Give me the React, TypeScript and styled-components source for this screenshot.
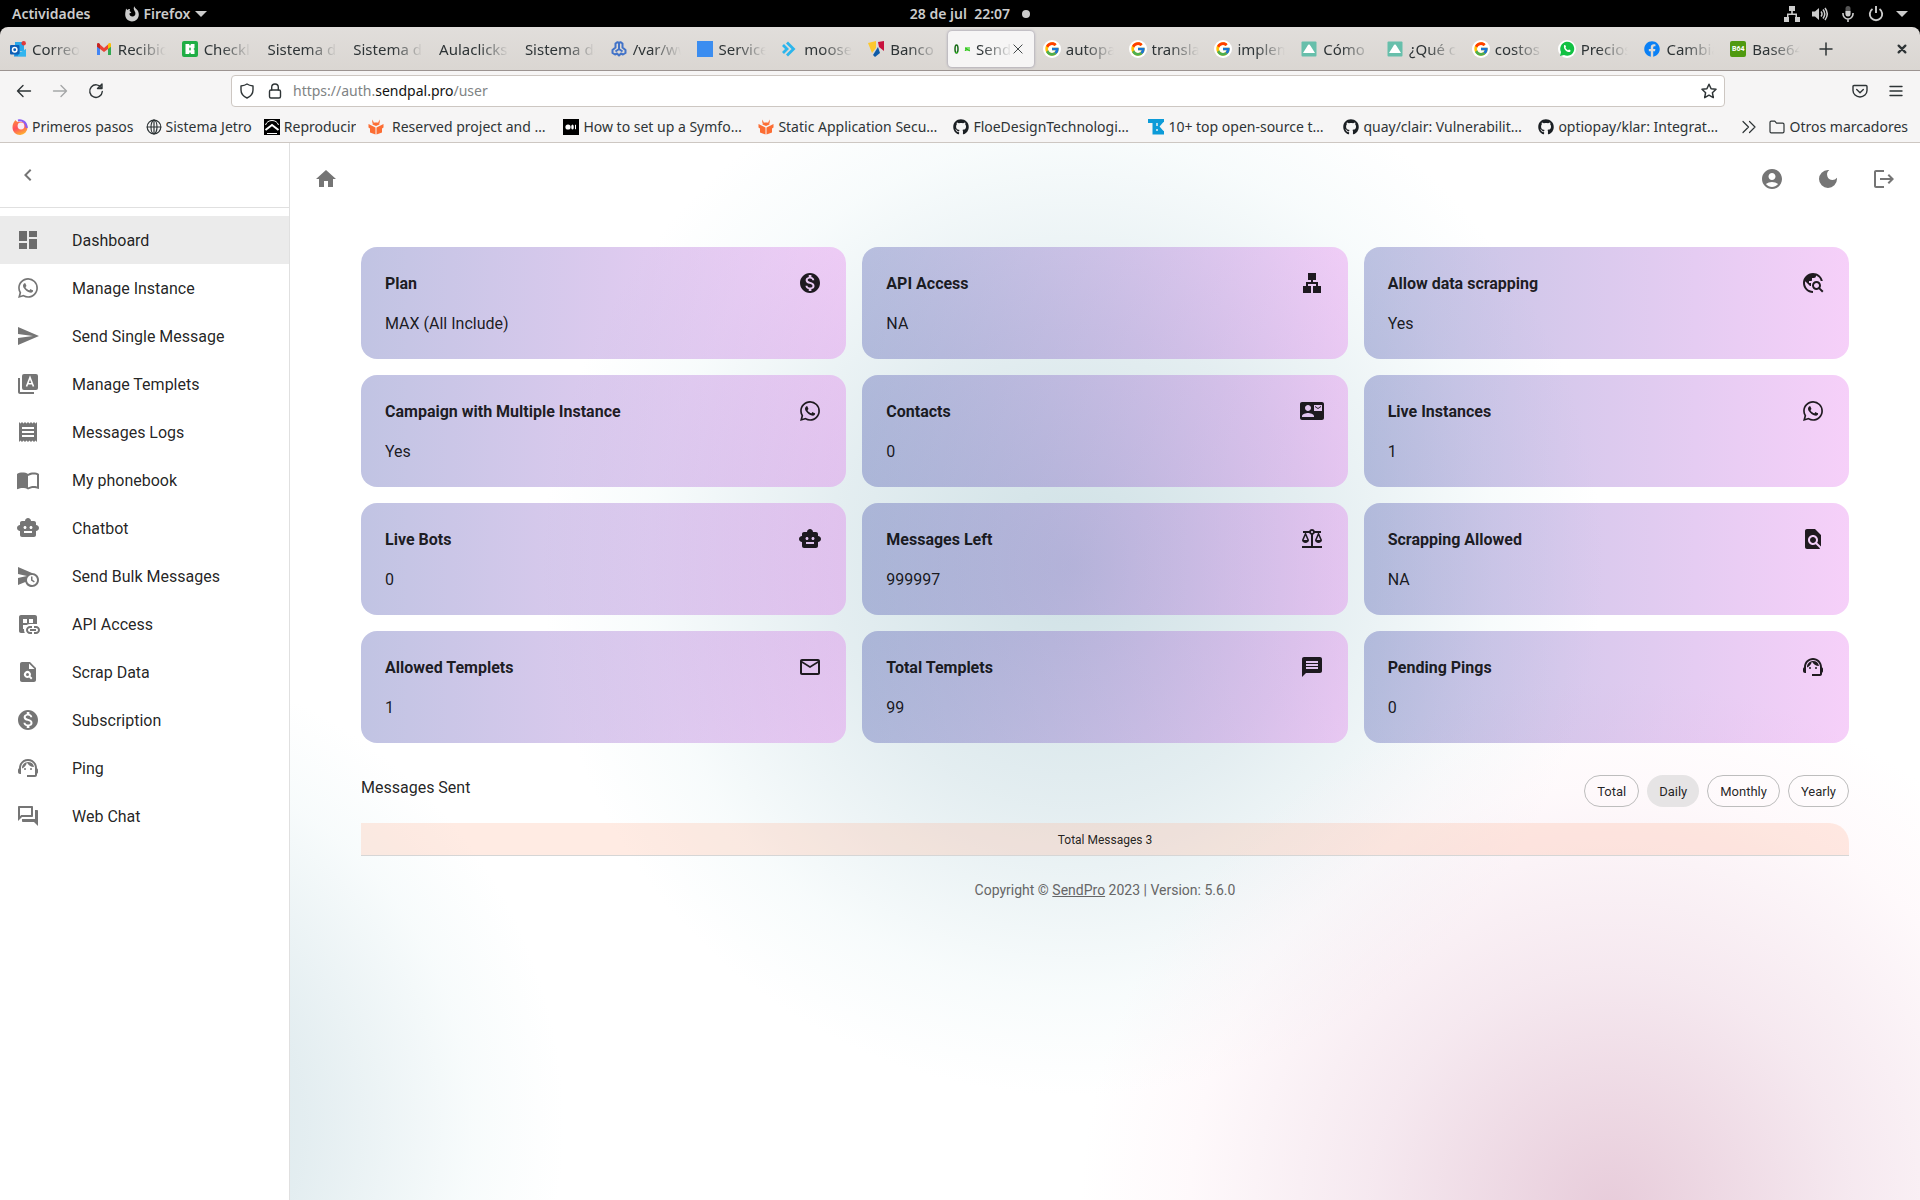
import React, { useState } from "react";
import styled, { createGlobalStyle, css } from "styled-components";
import {
  MdAccountCircle, MdBalance, MdChevronLeft, MdContactMail, MdDarkMode, MdDashboard, MdDatasetLinked,
  MdFindInPage, MdHome, MdImportContacts, MdLan, MdLogout, MdMailOutline, MdMessage, MdMonetizationOn,
  MdOutlineForum, MdPlagiarism, MdReceipt, MdScheduleSend, MdSend, MdSmartToy, MdSupportAgent,
  MdTravelExplore, MdWhatsapp,
} from "react-icons/md";
import { FaFacebook, FaGithub } from "react-icons/fa";
import { FcGoogle } from "react-icons/fc";

const systemFont = '"Noto Sans", "Open Sans", sans-serif';
const appFont = 'Roboto, "Liberation Sans", sans-serif';

const GlobalStyle = createGlobalStyle`
  *, *::before, *::after { box-sizing: border-box; }
  body { margin: 0; background: #fff; }
  button, input { font: inherit; color: inherit; }
  button { padding: 0; border: 0; background: none; cursor: pointer; }
  a { color: inherit; text-decoration: none; }
  svg { display: block; flex: none; }
`;

const Screen = styled.div`
  display: flex;
  flex-direction: column;
  min-height: 100vh;
  background: #fff;
`;

/* ---------- desktop bar ---------- */

const DesktopBar = styled.header`
  display: grid;
  grid-template-columns: 1fr auto 1fr;
  align-items: center;
  height: 27px;
  padding: 0 12px;
  background: #000;
  color: #ccc;
  font: 600 14px/20px ${systemFont};
`;

const BarGroup = styled.div<{ $end?: boolean; $gap: number }>`
  display: flex;
  align-items: center;
  gap: ${(p) => p.$gap}px;
  justify-content: ${(p) => (p.$end ? "flex-end" : "flex-start")};
`;

const Clock = styled.div`
  display: flex;
  align-items: center;
  gap: 12px;
  padding-left: 20px;
`;

const BarButton = styled.button`
  display: flex;
  align-items: center;
  gap: 5px;
`;

const Dot = styled.span`
  width: 8px;
  height: 8px;
  border-radius: 50%;
  background: #ccc;
`;

/* ---------- browser ---------- */

const TabStripBack = styled.div`
  background: #000;
`;

const TabStrip = styled.div`
  display: flex;
  align-items: center;
  height: 44px;
  padding: 0 8px 0 2px;
  border-radius: 8px 8px 0 0;
  border-bottom: 1px solid #9c9491;
  background: linear-gradient(#e1dedb, #dad6d2);
  color: #2e3436;
  font: 400 15px/20px ${systemFont};
`;

const TabList = styled.div`
  display: flex;
  flex: 0 1 1806px;
  min-width: 0;
`;

const Tab = styled.div<{ $active: boolean }>`
  display: flex;
  align-items: center;
  flex: 1 1 0;
  min-width: 0;
  height: 36px;
  margin: 0 2px;
  padding: 0 6px;
  border-radius: 4px;
  ${(p) => p.$active && css`
    padding-right: 10px;
    background: #f6f5f5;
    box-shadow: 0 0 3px #8d8aa0;
  `}
`;

const TabButton = styled.button`
  display: flex;
  align-items: center;
  flex: 1 1 0;
  gap: 6px;
  min-width: 0;
  text-align: left;
`;

const TabTitle = styled.span`
  flex: 1;
  overflow: hidden;
  white-space: nowrap;
  mask-image: linear-gradient(to left, transparent, #000 30px);
`;

const StripButton = styled.button<{ $push?: boolean }>`
  display: flex;
  align-items: center;
  justify-content: center;
  width: 20px;
  height: 24px;
  margin-left: ${(p) => (p.$push ? "auto" : "8px")};
`;

const Toolbar = styled.div`
  display: flex;
  align-items: center;
  height: 40px;
  padding: 0 12px;
  background: #f6f5f5;
  color: #2e3436;
`;

const NavButtons = styled.div`
  display: flex;
  gap: 12px;
  width: 219px;
  flex: none;
`;

const ToolButton = styled.button<{ $dim?: boolean }>`
  display: flex;
  align-items: center;
  justify-content: center;
  width: 24px;
  height: 24px;
  opacity: ${(p) => (p.$dim ? 0.4 : 1)};
`;

const UrlBar = styled.div`
  display: flex;
  align-items: center;
  flex: 1;
  min-width: 0;
  height: 32px;
  padding: 0 3px;
  border: 1px solid #cdc7c2;
  border-radius: 4px;
  background: #fff;
  font: 400 14px/20px ${systemFont};
`;

const UrlLabel = styled.label`
  margin-left: 6px;
  color: #808384;
  b { color: #111; font-weight: 400; }
`;

const UrlInput = styled.input`
  flex: 1;
  min-width: 0;
  border: 0;
  outline: 0;
  background: transparent;
`;

const ToolEnd = styled.div`
  display: flex;
  justify-content: flex-end;
  gap: 12px;
  width: 183px;
  flex: none;
`;

const UrlGroup = styled.div`
  display: flex;
  gap: 4px;
`;

const BookmarkBar = styled.nav`
  display: flex;
  align-items: center;
  gap: 12px;
  height: 32px;
  padding: 0 12px;
  background: #f6f5f5;
  border-bottom: 1px solid #cdc7c2;
  color: #2e3436;
  font: 400 14px/20px ${systemFont};
`;

const Bookmark = styled.a`
  display: flex;
  align-items: center;
  gap: 4px;
  flex: none;
  max-width: 183px;
  span {
    overflow: hidden;
    text-overflow: ellipsis;
    white-space: pre;
  }
`;

const BookmarkEnd = styled.div`
  display: flex;
  align-items: center;
  gap: 8px;
  margin-left: auto;
`;

const RoundBadge = styled.span`
  display: flex;
  padding: 1px;
  margin: -1px;
  border-radius: 50%;
  background: #fff;
`;

/* ---------- application ---------- */

const Workspace = styled.div`
  display: flex;
  flex: 1;
  font: 400 16px/24px ${appFont};
  color: rgba(0, 0, 0, 0.87);
`;

const Sidebar = styled.aside`
  width: 290px;
  flex: none;
  border-right: 1px solid #e0e0e0;
  background: #fff;
`;

const SidebarHead = styled.div`
  display: flex;
  align-items: center;
  height: 65px;
  padding: 0 16px;
  border-bottom: 1px solid #e0e0e0;
  color: #757575;
`;

const SideNav = styled.nav`
  padding: 8px 0;
`;

const SideLink = styled.a<{ $active: boolean }>`
  display: flex;
  align-items: center;
  gap: 32px;
  height: 48px;
  padding: 0 16px;
  background: ${(p) => (p.$active ? "#ebebeb" : "transparent")};
  svg { color: ${(p) => (p.$active ? "#6c6c6c" : "#757575")}; }
  span { padding-top: 2px; }
`;

const Main = styled.main`
  flex: 1;
  min-width: 0;
  background:
    radial-gradient(circle 530px at 81% 101%, rgba(222, 184, 204, 0.72), rgba(236, 210, 224, 0.5) 45%, rgba(252, 232, 240, 0.25) 80%, rgba(255, 240, 245, 0)),
    radial-gradient(circle 530px at 48% 40%, rgba(190, 214, 220, 0.74), rgba(200, 220, 226, 0.5) 45%, rgba(220, 238, 240, 0.22) 80%, rgba(230, 245, 245, 0)),
    radial-gradient(circle 470px at -12% 93%, rgba(190, 214, 220, 0.74), rgba(200, 220, 226, 0.5) 45%, rgba(220, 238, 240, 0.22) 80%, rgba(230, 245, 245, 0));
`;

const AppBar = styled.div`
  display: flex;
  align-items: center;
  gap: 16px;
  height: 72px;
  padding: 0 16px;
  color: #757575;
`;

const IconButton = styled.button<{ $first?: boolean }>`
  display: flex;
  align-items: center;
  justify-content: center;
  width: 40px;
  height: 40px;
  margin-right: ${(p) => (p.$first ? "auto" : "0")};
`;

const Container = styled.div`
  max-width: 1536px;
  margin: 0 auto;
  padding: 32px 24px;
`;

const CardGrid = styled.div`
  display: grid;
  grid-template-columns: repeat(3, 1fr);
  gap: 16px;
`;

const Card = styled.section`
  display: flex;
  flex-direction: column;
  gap: 14px;
  padding: 24px 24px 22px;
  border-radius: 16px;
  background: linear-gradient(to right, rgba(7, 19, 143, 0.25), rgba(219, 67, 231, 0.25));
`;

const CardHead = styled.div`
  display: flex;
  justify-content: space-between;
`;

const CardTitle = styled.h2`
  margin: 0;
  font: 700 16px/26px ${appFont};
`;

const CardValue = styled.p`
  margin: 0;
  line-height: 26px;
`;

const SentRow = styled.div`
  display: flex;
  justify-content: space-between;
  align-items: flex-start;
  margin: 32px 0 16px;
`;

const SentTitle = styled.h3`
  margin: 0;
  font: 400 16px/26px ${appFont};
`;

const Chips = styled.div`
  display: flex;
  gap: 8px;
`;

const Chip = styled.button<{ $on: boolean }>`
  height: 32px;
  padding: 2px 12px 0;
  border-radius: 16px;
  font: 400 13px/20px ${appFont};
  ${(p) => (p.$on
    ? css`background: #e6e4e5;`
    : css`border: 1px solid #bdbdbd;`)}
`;

const TotalBar = styled.div`
  height: 33px;
  border-bottom: 1px solid #d6d6d6;
  border-radius: 0 20px 0 0;
  background: rgba(255, 175, 145, 0.25);
  font: 400 12px/34px ${appFont};
  text-align: center;
`;

const Footer = styled.footer`
  margin-top: 24px;
  color: #666;
  font-size: 14px;
  line-height: 20px;
  text-align: center;
  a { text-decoration: underline; }
`;

/* ---------- drawings ---------- */

const Svg = ({ size = 16, children }: { size?: number; children: React.ReactNode }) => (
  <svg width={size} height={size} viewBox="0 0 16 16" fill="none" stroke="currentColor" strokeWidth="1.2"
    strokeLinecap="round" strokeLinejoin="round" aria-hidden="true">{children}</svg>
);

const FirefoxMark = () => (
  <svg width="14" height="16" viewBox="0 0 14 16" fill="#ccc" aria-hidden="true">
    <path d="M1 2.5 2.3 4C3 3.2 4 2.8 5 3L4.6 5l1.8 1.6-2 1c0 2 1.6 3.2 3.2 3 1.8-.2 3-1.6 2.8-3.6-.2-1.600-1.400-2.500-1.600-4.100C8.600 2 9 .9 9.400.2c.2 1.700 1.300 2.100 2.400 3.200C13.100 4.700 13.800 6.500 13.800 8.500c0 4-3 7-6.800 7s-6.800-3-6.800-6.900C.2 6 .9 4.500 1 2.500z" />
  </svg>
);

const Caret = () => (
  <svg width="12" height="8" viewBox="0 0 12 8" fill="#ccc" aria-hidden="true"><path d="M0 1h12L6 7z" /></svg>
);

const NetworkIcon = () => (
  <svg width="16" height="16" viewBox="0 0 16 16" fill="#ccc" aria-hidden="true">
    <path d="M5 0h6v5H8.800v2.500H13V11h3v5h-5v-5h.5V9H4.500v2H5v5H0v-5h3V7.500h4.200V5H5z" />
  </svg>
);

const VolumeIcon = () => (
  <svg width="16" height="16" viewBox="0 0 16 16" fill="#ccc" aria-hidden="true">
    <path d="M0 5.500h3L7 2v12l-4-3.500H0z" />
    <path d="M9 5.500q2 2.500 0 5M11 3.500q3.500 4.500 0 9M13 2q4.500 6 0 12" fill="none" stroke="#ccc" strokeWidth="1.500" />
  </svg>
);

const MicIcon = () => (
  <svg width="16" height="16" viewBox="0 0 16 16" aria-hidden="true">
    <rect x="5.500" y="0" width="5" height="10" rx="2.500" fill="#555" />
    <path d="M5.500 5h5v3a2.500 2.500 0 0 1-5 0z" fill="#ccc" />
    <path d="M3 7v1a5 5 0 0 0 10 0V7M8 13v3" fill="none" stroke="#ccc" strokeWidth="1.600" />
  </svg>
);

const PowerIcon = () => (
  <svg width="16" height="16" viewBox="0 0 16 16" fill="none" stroke="#ccc" strokeWidth="1.900" aria-hidden="true">
    <path d="M4.500 3a6.200 6.200 0 1 0 7 0M8 0v7" />
  </svg>
);

const OutlookIcon = () => (
  <svg width="16" height="16" viewBox="0 0 16 16" aria-hidden="true">
    <path d="M5 1h9v9H5z" fill="#28a8ea" /><path d="M5 8l6 3 5-3v7.500H4z" fill="#1490df" /><path d="M8 12l8-4v7.500H8z" fill="#50d9ff" opacity=".5" />
    <rect y="4" width="9.500" height="9.500" rx="1" fill="#0f5fb5" />
    <circle cx="4.700" cy="8.700" r="2.200" fill="none" stroke="#fff" strokeWidth="1.500" />
    <circle cx="13.700" cy="2.200" r="2.200" fill="#e03a3a" />
  </svg>
);

const GmailIcon = () => (
  <svg width="16" height="16" viewBox="0 0 16 16" aria-hidden="true">
    <path d="M1 4v10h3V7z" fill="#4285f4" /><path d="M15 4v10h-3V7z" fill="#34a853" />
    <path d="M4 3.500 8 7l4-3.500V8l-4 3-4-3z" fill="#ea4335" />
    <path d="M1 5V3.500C1 2 2.500 1.500 4 3v5L1 5.800z" fill="#c5221f" /><path d="M15 5V3.500C15 2 13.500 1.500 12 3v5l3-2.200z" fill="#fbbc04" />
  </svg>
);

const ChecklyIcon = () => (
  <svg width="16" height="16" viewBox="0 0 16 16" aria-hidden="true">
    <rect width="16" height="16" rx="2" fill="#1fae45" />
    <path d="M3.500 3h3.500l1 2 1-2h3.500v4l-1 1 1 1v4H9l-1-2-1 2H3.500z" fill="#fff" />
    <path d="M8 6.500v3M7 8h2" stroke="#1fae45" />
  </svg>
);

const KnotIcon = () => (
  <svg width="16" height="16" viewBox="0 0 16 16" fill="none" stroke="#4273c8" strokeWidth="2" strokeLinejoin="round" aria-hidden="true">
    <path d="M8 2 6.500 1.200 4.500 2.500v4L1.500 9v3l2.500 1.500 2-1 2 2 2-2 2 1 2.500-1.500V9l-3-2.500v-4L9.500 1.200z" />
    <path d="M8 2v6M4.500 10.500 8 8l3.500 2.500" />
  </svg>
);

const SquareIcon = () => (
  <svg width="16" height="16" viewBox="0 0 16 16" aria-hidden="true"><path d="M0 0h16v16H0z" fill="#3b8df0" /></svg>
);

const MooseIcon = () => (
  <svg width="16" height="16" viewBox="0 0 16 16" fill="none" stroke="#2cb5ec" strokeWidth="2.800" aria-hidden="true">
    <path d="M5 1.500 11.500 8 5 14.500M1 4l4 4-4 4" />
  </svg>
);

const BancoIcon = () => (
  <svg width="16" height="16" viewBox="0 0 16 16" aria-hidden="true">
    <path d="M0 2 8 0v7l-4 5z" fill="#fdc82f" /><path d="M10 1l6-1v10l-5-4z" fill="#c8123e" /><path d="M5 14 10 6l2 6-5 4z" fill="#0e5ba8" />
  </svg>
);

const SendIcon = () => (
  <svg width="16" height="16" viewBox="0 0 16 16" aria-hidden="true">
    <ellipse cx="2.500" cy="8" rx="1.500" ry="4" fill="none" stroke="#176b16" strokeWidth="1.500" /><path d="M1.500 11.500h2" stroke="#35d321" />
    <path d="M11 6h5v4h-5z" fill="#7ee26f" /><path d="M11 7l5 3M11 10l2-3" stroke="#2ebd1c" />
  </svg>
);

const ArticleIcon = () => (
  <svg width="16" height="16" viewBox="0 0 16 16" aria-hidden="true">
    <rect x=".5" y=".5" width="15" height="15" rx="1" fill="#67bfab" /><path d="M8 3.500c.8 0 1 .6 1.600 1.500L14 12H2l4.400-7C7 4 7.200 3.500 8 3.500z" fill="#fff" />
  </svg>
);

const PhoneBubbleIcon = () => (
  <svg width="16" height="16" viewBox="0 0 16 16" aria-hidden="true">
    <path d="M1 15l1-4a7 7 0 1 1 3 3z" fill="#12c143" />
    <path d="M5 4.500c1-.8 1.500-.3 2 1.200l-.5 1c.5 1 1.500 2 2.500 2.500l1-.8c1 .4 2 .8 1.500 1.800-1.500 2.500-7.500-1-6.500-5.700z" fill="#fff" />
  </svg>
);

const B64Label = styled.span`
  display: flex;
  align-items: center;
  justify-content: center;
  flex: none;
  width: 16px;
  height: 16px;
  border-radius: 2px;
  background: #4f9a10;
  color: #fff;
  font: 700 7px/16px ${appFont};
`;

const GoogleIcon = () => <RoundBadge><FcGoogle size={16} /></RoundBadge>;

const FlameIcon = () => (
  <svg width="16" height="16" viewBox="0 0 16 16" aria-hidden="true">
    <defs>
      <linearGradient id="flame" x1="0.200" y1="0" x2="0.600" y2="1">
        <stop offset="0" stopColor="#ff8a3d" /><stop offset=".5" stopColor="#ff4f5e" /><stop offset="1" stopColor="#ffb52e" />
      </linearGradient>
    </defs>
    <path d="M2 3c.5-.8 1-1 1.500-2 .5 1 1.500 1.500 2 2C9 2 15.500 4 15.500 8.500A7.400 7.400 0 0 1 8 16C4 16 .5 13 .5 8.500.5 6 1 4.500 2 3z" fill="url(#flame)" />
    <path d="M6 1.500C10 .5 14.500 3 14.800 9" fill="none" stroke="#8a5cf5" strokeWidth="2" />
    <circle cx="9" cy="7" r="3.400" fill="#fbeaf2" />
  </svg>
);

const GlobeIcon = () => (
  <Svg><circle cx="8" cy="8" r="6.800" /><ellipse cx="8" cy="8" rx="3" ry="6.800" /><path d="M1.200 8h13.600M8 1.200v13.600" /></Svg>
);

const ReproIcon = () => (
  <svg width="16" height="16" viewBox="0 0 16 16" aria-hidden="true">
    <path d="M0 0h16v16H0z" fill="#000" />
    <path d="M1.500 6C2.500 3 5 1.500 8 1.500S13.500 3 14.500 6M3 14.500h10" fill="none" stroke="#fff" />
    <path d="M1.500 11 8 6l6.500 5" fill="none" stroke="#fff" strokeWidth="2" />
  </svg>
);

const FoxIcon = () => (
  <svg width="16" height="16" viewBox="0 0 16 16" fill="#fc6d33" aria-hidden="true">
    <path d="M.500 5 7.500 8.500v7L2 13.500v-4L.500 8.500zM15.500 5 8.500 8.500v7l5.500-2v-4l1.500-1z" /><path d="M4.500 5.500c0-1.500 1.500-2 3.500-2s3.500.5 3.500 2L8 7zM4 .5l2 3-1.500 1zM12 .5l-2 3 1.500 1z" />
  </svg>
);

const MediumIcon = () => (
  <svg width="16" height="16" viewBox="0 0 16 16" aria-hidden="true">
    <path d="M0 0h16v16H0z" fill="#000" /><circle cx="5" cy="8" r="2.600" fill="#fff" /><ellipse cx="9.500" cy="8" rx="1.300" ry="2.500" fill="#fff" /><path d="M12.500 5.800v4.400" stroke="#fff" />
  </svg>
);

const TargetIcon = () => (
  <svg width="16" height="16" viewBox="0 0 16 16" fill="#0c9bd8" aria-hidden="true">
    <path d="M0 0h16v3l-3 4.500 3 4.500v3.500H4.500V4H0z" /><path d="M9 4v3M16 3.500l-3.500 4 3.500 4M9 10v2" fill="none" stroke="#f6f5f5" strokeWidth="1.400" />
  </svg>
);

const TempletIcon = () => (
  <svg width="24" height="24" viewBox="0 0 24 24" fill="currentColor" aria-hidden="true">
    <path d="M4 6H2v14c0 1.100.9 2 2 2h14v-2H4z" /><rect x="6" y="2" width="16" height="16" rx="2" />
    <path d="m10.500 14.500 3.500-9 3.500 9M11.700 11.700h4.600" fill="none" stroke="#fff" strokeWidth="1.600" />
  </svg>
);

/* ---------- data ---------- */

const tabs: { title: string; icon?: React.ReactNode }[] = [
  { title: "Correo", icon: <OutlookIcon /> },
  { title: "Recibidos", icon: <GmailIcon /> },
  { title: "Checklist", icon: <ChecklyIcon /> },
  { title: "Sistema de" },
  { title: "Sistema de" },
  { title: "Aulaclicks" },
  { title: "Sistema de" },
  { title: "/var/www", icon: <KnotIcon /> },
  { title: "Services", icon: <SquareIcon /> },
  { title: "moosend", icon: <MooseIcon /> },
  { title: "Banco", icon: <BancoIcon /> },
  { title: "SendPro", icon: <SendIcon /> },
  { title: "autopark", icon: <GoogleIcon /> },
  { title: "translate", icon: <GoogleIcon /> },
  { title: "implement", icon: <GoogleIcon /> },
  { title: "Cómo", icon: <ArticleIcon /> },
  { title: "¿Qué con", icon: <ArticleIcon /> },
  { title: "costos", icon: <GoogleIcon /> },
  { title: "Precios", icon: <RoundBadge><PhoneBubbleIcon /></RoundBadge> },
  { title: "Cambiar", icon: <FaFacebook size={16} color="#0a80f5" /> },
  { title: "Base64", icon: <B64Label>B64</B64Label> },
];

const bookmarks = [
  { title: "Primeros pasos", icon: <FlameIcon /> },
  { title: "Sistema Jetro", icon: <GlobeIcon /> },
  { title: "Reproducir", icon: <ReproIcon /> },
  { title: " Reserved project and group names", icon: <FoxIcon /> },
  { title: "How to set up a Symfony project", icon: <MediumIcon /> },
  { title: "Static Application Security Testing", icon: <FoxIcon /> },
  { title: "FloeDesignTechnologies/phpcs", icon: <FaGithub size={16} color="#1b1f23" /> },
  { title: "10+ top open-source tools", icon: <TargetIcon /> },
  { title: "quay/clair: Vulnerability Static", icon: <FaGithub size={16} color="#1b1f23" /> },
  { title: "optiopay/klar: Integration of", icon: <FaGithub size={16} color="#1b1f23" /> },
];

const menu = [
  { label: "Dashboard", icon: <MdDashboard size={24} /> },
  { label: "Manage Instance", icon: <MdWhatsapp size={24} /> },
  { label: "Send Single Message", icon: <MdSend size={24} /> },
  { label: "Manage Templets", icon: <TempletIcon /> },
  { label: "Messages Logs", icon: <MdReceipt size={24} /> },
  { label: "My phonebook", icon: <MdImportContacts size={24} /> },
  { label: "Chatbot", icon: <MdSmartToy size={24} /> },
  { label: "Send Bulk Messages", icon: <MdScheduleSend size={24} /> },
  { label: "API Access", icon: <MdDatasetLinked size={24} /> },
  { label: "Scrap Data", icon: <MdPlagiarism size={24} /> },
  { label: "Subscription", icon: <MdMonetizationOn size={24} /> },
  { label: "Ping", icon: <MdSupportAgent size={24} /> },
  { label: "Web Chat", icon: <MdOutlineForum size={24} /> },
];

const cards = [
  { title: "Plan", value: "MAX (All Include)", icon: <MdMonetizationOn size={24} /> },
  { title: "API Access", value: "NA", icon: <MdLan size={24} /> },
  { title: "Allow data scrapping", value: "Yes", icon: <MdTravelExplore size={24} /> },
  { title: "Campaign with Multiple Instance", value: "Yes", icon: <MdWhatsapp size={24} /> },
  { title: "Contacts", value: "0", icon: <MdContactMail size={24} /> },
  { title: "Live Instances", value: "1", icon: <MdWhatsapp size={24} /> },
  { title: "Live Bots", value: "0", icon: <MdSmartToy size={24} /> },
  { title: "Messages Left", value: "999997", icon: <MdBalance size={24} /> },
  { title: "Scrapping Allowed", value: "NA", icon: <MdFindInPage size={24} /> },
  { title: "Allowed Templets", value: "1", icon: <MdMailOutline size={24} /> },
  { title: "Total Templets", value: "99", icon: <MdMessage size={24} /> },
  { title: "Pending Pings", value: "0", icon: <MdSupportAgent size={24} /> },
];

const periods = ["Total", "Daily", "Monthly", "Yearly"];

export default function App() {
  const [period, setPeriod] = useState("Daily");
  const [page, setPage] = useState("Dashboard");

  return (
    <Screen>
      <GlobalStyle />
      <DesktopBar>
        <BarGroup $gap={34}>
          <BarButton>Actividades</BarButton>
          <BarButton><FirefoxMark />Firefox<Caret /></BarButton>
        </BarGroup>
        <Clock><span>28 de jul&nbsp; 22:07</span><Dot /></Clock>
        <BarGroup $gap={12} $end><NetworkIcon /><VolumeIcon /><MicIcon /><PowerIcon /><Caret /></BarGroup>
      </DesktopBar>

      <TabStripBack>
        <TabStrip>
          <TabList role="tablist">
            {tabs.map((tab, i) => (
              <Tab key={i} $active={i === 11}>
                <TabButton role="tab" aria-selected={i === 11}>
                  {tab.icon}
                  <TabTitle>{tab.title}</TabTitle>
                </TabButton>
                {i === 11 && (
                  <button aria-label="Close tab"><Svg size={12}><path d="M2.500 2.500l11 11M13.500 2.500l-11 11" /></Svg></button>
                )}
              </Tab>
            ))}
          </TabList>
          <StripButton aria-label="New tab"><Svg><path d="M8 2v12M2 8h12" strokeWidth="1.500" /></Svg></StripButton>
          <StripButton $push aria-label="Close window">
            <Svg size={12}><path d="M3.500 3.500l9 9M12.500 3.500l-9 9" strokeWidth="3" /></Svg>
          </StripButton>
        </TabStrip>
      </TabStripBack>

      <Toolbar>
        <NavButtons>
          <ToolButton aria-label="Back"><Svg><path d="M1.500 8h13M7 2.500 1.500 8 7 13.500" strokeWidth="1.400" /></Svg></ToolButton>
          <ToolButton $dim aria-label="Forward"><Svg><path d="M1.500 8h13M9 2.500 14.500 8 9 13.500" strokeWidth="1.400" /></Svg></ToolButton>
          <ToolButton aria-label="Reload"><Svg><path d="M13.500 5A6.300 6.300 0 1 0 14.300 8.500M14 1v4.500H9.500z" strokeWidth="1.400" /></Svg></ToolButton>
        </NavButtons>
        <UrlBar>
          <UrlGroup>
            <ToolButton aria-label="Tracking protection"><Svg><path d="M8 1C6 2.300 4 2.700 2 3v4c0 4 2.500 6.500 6 8 3.500-1.500 6-4 6-8V3c-2-.3-4-.7-6-2z" strokeWidth="1.400" /></Svg></ToolButton>
            <ToolButton aria-label="Site information"><Svg><rect x="2.500" y="7" width="11" height="8" rx="1.500" strokeWidth="1.400" /><path d="M4.700 7V4.300a3.300 3.300 0 0 1 6.600 0V7" strokeWidth="1.400" /></Svg></ToolButton>
          </UrlGroup>
          <UrlLabel htmlFor="address">https://auth.<b>sendpal.pro</b>/user</UrlLabel>
          <UrlInput id="address" type="text" />
          <ToolButton aria-label="Bookmark this page"><Svg><path d="m8 1.200 2.100 4.500 4.900.6-3.600 3.400.9 4.900L8 12.200l-4.300 2.400.9-4.900L1 6.300l4.900-.6z" strokeWidth="1.500" /></Svg></ToolButton>
        </UrlBar>
        <ToolEnd>
          <ToolButton aria-label="Save to Pocket"><Svg><path d="M2 2.500h12c.6 0 1 .4 1 1V7.500a7 6.500 0 0 1-14 0V3.500c0-.6.4-1 1-1zM4.700 6.500 8 9.700l3.300-3.200" strokeWidth="1.400" /></Svg></ToolButton>
          <ToolButton aria-label="Menu"><Svg><path d="M2 3.500h12M2 8h12M2 12.500h12" strokeWidth="1.400" /></Svg></ToolButton>
        </ToolEnd>
      </Toolbar>

      <BookmarkBar>
        {bookmarks.map((b) => (
          <Bookmark key={b.title} href="#">{b.icon}<span>{b.title}</span></Bookmark>
        ))}
        <BookmarkEnd>
          <ToolButton aria-label="More bookmarks"><Svg><path d="M2 2.500 7.500 8 2 13.500M8.500 2.500 14 8l-5.500 5.500" /></Svg></ToolButton>
          <Bookmark href="#"><Svg><path d="M1 3.500c0-.8.500-1.300 1.300-1.300h3.500l1.700 2h6.200c.8 0 1.300.5 1.300 1.300v7c0 .8-.5 1.300-1.300 1.300H2.300c-.8 0-1.300-.5-1.300-1.300z" /></Svg><span>Otros marcadores</span></Bookmark>
        </BookmarkEnd>
      </BookmarkBar>

      <Workspace>
        <Sidebar>
          <SidebarHead><button aria-label="Collapse menu"><MdChevronLeft size={24} /></button></SidebarHead>
          <SideNav>
            {menu.map((m) => (
              <SideLink key={m.label} href="#" $active={m.label === page} onClick={() => setPage(m.label)}>
                {m.icon}<span>{m.label}</span>
              </SideLink>
            ))}
          </SideNav>
        </Sidebar>
        <Main>
          <AppBar>
            <IconButton $first aria-label="Home"><MdHome size={24} /></IconButton>
            <IconButton aria-label="Account"><MdAccountCircle size={24} /></IconButton>
            <IconButton aria-label="Dark mode"><MdDarkMode size={24} /></IconButton>
            <IconButton aria-label="Log out"><MdLogout size={24} /></IconButton>
          </AppBar>
          <Container>
            <CardGrid>
              {cards.map((c) => (
                <Card key={c.title}>
                  <CardHead><CardTitle>{c.title}</CardTitle>{c.icon}</CardHead>
                  <CardValue>{c.value}</CardValue>
                </Card>
              ))}
            </CardGrid>
            <SentRow>
              <SentTitle>Messages Sent</SentTitle>
              <Chips>
                {periods.map((p) => (
                  <Chip key={p} $on={p === period} onClick={() => setPeriod(p)}>{p}</Chip>
                ))}
              </Chips>
            </SentRow>
            <TotalBar>Total Messages 3</TotalBar>
            <Footer>Copyright © <a href="#">SendPro</a> 2023 | Version: 5.6.0</Footer>
          </Container>
        </Main>
      </Workspace>
    </Screen>
  );
}
